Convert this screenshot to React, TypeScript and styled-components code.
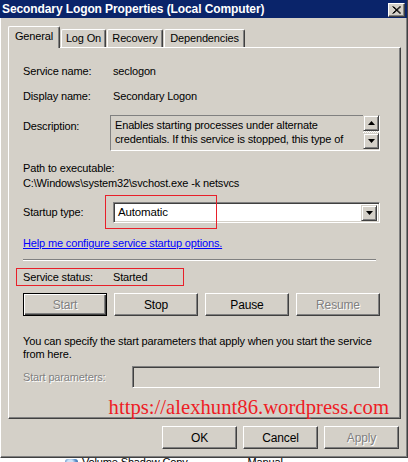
import React from "react";
import styled, { createGlobalStyle, css } from "styled-components";

const GlobalStyle = createGlobalStyle`
  html, body { margin: 0; padding: 0; background: #ffffff; }
  body {
    font-family: "Liberation Sans", Arial, sans-serif;
    font-size: 11px;
    letter-spacing: -0.15px;
    color: #000;
    overflow: hidden;
  }
  * { box-sizing: border-box; }
`;

const FACE = "#d4d0c8";
const SHADOW = "#808080";
const DARK = "#404040";

const Page = styled.div`
  width: 408px;
  height: 462px;
  display: flex;
  flex-direction: column;
  overflow: hidden;
`;

const Window = styled.div`
  width: 408px;
  height: 458px;
  flex: none;
  background: ${FACE};
  border-left: 1px solid #ffffff;
  border-right: 1px solid ${DARK};
  border-bottom: 1px solid ${DARK};
  box-shadow: inset -1px -1px 0 ${SHADOW};
  display: flex;
  flex-direction: column;
`;

const TitleBar = styled.div`
  height: 18px;
  flex: none;
  background: #0a246a;
  display: flex;
  align-items: center;
  justify-content: space-between;
  padding: 0 2px 0 2px;
  margin-left: -1px;
`;

const TitleText = styled.span`
  color: #ffffff;
  font-weight: bold;
  font-size: 12px;
  letter-spacing: -0.1px;
  white-space: nowrap;
`;

const CloseButton = styled.div`
  width: 17px;
  height: 14px;
  margin-top: 2px;
  background: ${FACE};
  border-top: 1px solid #ffffff;
  border-left: 1px solid #ffffff;
  border-right: 1px solid ${DARK};
  border-bottom: 1px solid ${DARK};
  box-shadow: inset -1px -1px 0 ${SHADOW};
  display: flex;
  align-items: center;
  justify-content: center;
`;

const TabStrip = styled.div`
  display: flex;
  align-items: flex-end;
  height: 21px;
  margin-top: 8px;
  margin-left: 7px;
  position: relative;
  z-index: 2;
`;

const Tab = styled.div<{ $w: number; $active?: boolean }>`
  width: ${(p) => p.$w}px;
  display: flex;
  align-items: center;
  justify-content: center;
  white-space: nowrap;
  background: ${FACE};
  border-top: 1px solid #ffffff;
  border-left: 1px solid #ffffff;
  border-right: 1px solid ${DARK};
  box-shadow: inset -1px 0 0 ${SHADOW};
  border-top-left-radius: 2px;
  border-top-right-radius: 2px;
  ${(p) =>
    p.$active
      ? css`
          height: 22px;
          margin-bottom: -1px;
          padding-bottom: 3px;
        `
      : css`
          height: 18px;
          margin-left: 1px;
          padding-bottom: 1px;
        `}
`;

const Panel = styled.div`
  width: 393px;
  height: 372px;
  margin-left: 7px;
  flex: none;
  border-top: 1px solid #ffffff;
  border-left: 1px solid #ffffff;
  border-right: 1px solid ${DARK};
  border-bottom: 1px solid ${DARK};
  box-shadow: inset -1px -1px 0 ${SHADOW};
  padding: 0 0 0 14px;
  display: flex;
  flex-direction: column;
`;

const Row = styled.div<{ $top: number; $align?: string }>`
  display: flex;
  align-items: ${(p) => p.$align || "center"};
  margin-top: ${(p) => p.$top}px;
  line-height: 13px;
  white-space: nowrap;
  position: relative;
`;

const Label = styled.div<{ $w?: number; $disabled?: boolean; $pt?: number }>`
  width: ${(p) => p.$w ?? 90}px;
  flex: none;
  line-height: 13px;
  padding-top: ${(p) => p.$pt ?? 0}px;
  ${(p) =>
    p.$disabled &&
    css`
      color: ${SHADOW};
      text-shadow: 1px 1px 0 #ffffff;
    `}
`;

const Text = styled.div<{ $top: number }>`
  margin-top: ${(p) => p.$top}px;
  line-height: 13px;
`;

const DescBox = styled.div`
  width: 270px;
  height: 36px;
  margin-left: -3px;
  border-top: 1px solid ${SHADOW};
  border-left: 1px solid ${SHADOW};
  border-right: 1px solid #ffffff;
  border-bottom: 1px solid #ffffff;
  display: flex;
  padding: 1px 0 0 4px;
`;

const DescText = styled.div`
  flex: 1;
  line-height: 14px;
  white-space: normal;
  padding-top: 1px;
`;

const ScrollCol = styled.div`
  width: 16px;
  display: flex;
  flex-direction: column;
  justify-content: space-between;
  margin-top: -2px;
  margin-bottom: 1px;
  background-image: repeating-conic-gradient(#ffffff 0% 25%, ${FACE} 0% 50%);
  background-size: 2px 2px;
`;

const ScrollBtn = styled.div`
  width: 16px;
  height: 16px;
  background: ${FACE};
  border-top: 1px solid ${FACE};
  border-left: 1px solid ${FACE};
  border-right: 1px solid ${DARK};
  border-bottom: 1px solid ${DARK};
  box-shadow: inset 1px 1px 0 #ffffff, inset -1px -1px 0 ${SHADOW};
  display: flex;
  align-items: center;
  justify-content: center;
`;

const Combo = styled.div`
  width: 267px;
  height: 21px;
  border-top: 1px solid ${SHADOW};
  border-left: 1px solid ${SHADOW};
  border-right: 1px solid #ffffff;
  border-bottom: 1px solid #ffffff;
  box-shadow: inset 1px 1px 0 ${DARK}, inset -1px -1px 0 ${FACE};
  background: #ffffff;
  display: flex;
  align-items: center;
  justify-content: space-between;
  padding: 0 2px 0 4px;
  font-size: 11.5px;
`;

const Annotation = styled.div<{ $l: number; $t: number; $w: number; $h: number }>`
  position: absolute;
  left: ${(p) => p.$l}px;
  top: ${(p) => p.$t}px;
  width: ${(p) => p.$w}px;
  height: ${(p) => p.$h}px;
  border: 1px solid #e8202a;
  pointer-events: none;
`;

const HelpLink = styled.a`
  color: #0000ff;
  text-decoration: underline;
  margin-top: 14px;
  line-height: 13px;
  align-self: flex-start;
`;

const Separator = styled.div`
  width: 353px;
  height: 2px;
  margin-top: 9px;
  border-top: 1px solid ${SHADOW};
  border-bottom: 1px solid #ffffff;
`;

const StatusBox = styled.div`
  width: 168px;
  height: 21px;
  margin-top: 7px;
  margin-left: -7px;
  padding-left: 6px;
  border: 1px solid #e8202a;
  display: flex;
  align-items: center;
  white-space: nowrap;
`;

const ButtonGrid = styled.div`
  display: grid;
  grid-template-columns: repeat(4, 84px);
  column-gap: 7px;
  margin-top: 7px;
`;

const Button = styled.div<{ $disabled?: boolean; $default?: boolean; $w?: number }>`
  height: 23px;
  ${(p) => p.$w && css`width: ${p.$w}px;`}
  background: ${FACE};
  display: flex;
  align-items: center;
  justify-content: center;
  font-size: 12px;
  border-top: 1px solid #ffffff;
  border-left: 1px solid #ffffff;
  border-right: 1px solid ${DARK};
  border-bottom: 1px solid ${DARK};
  box-shadow: inset -1px -1px 0 ${SHADOW};
  ${(p) =>
    p.$default &&
    css`
      border: 1px solid #000000;
      box-shadow: inset 1px 1px 0 #ffffff, inset -1px -1px 0 ${DARK},
        inset -2px -2px 0 ${SHADOW};
    `}
  ${(p) =>
    p.$disabled &&
    css`
      color: ${SHADOW};
      text-shadow: 1px 1px 0 #ffffff;
    `}
`;

const Input = styled.div<{ $w: number }>`
  width: ${(p) => p.$w}px;
  height: 22px;
  margin-left: 19px;
  background: ${FACE};
  border-top: 1px solid ${SHADOW};
  border-left: 1px solid ${SHADOW};
  border-right: 1px solid #ffffff;
  border-bottom: 1px solid #ffffff;
  box-shadow: inset 1px 1px 0 ${DARK}, inset -1px -1px 0 ${FACE};
`;

const Watermark = styled.div`
  align-self: flex-end;
  margin-top: 8px;
  margin-right: 11px;
  font-family: "Liberation Serif", "Times New Roman", serif;
  font-size: 20.7px;
  letter-spacing: 0;
  line-height: 22px;
  color: #ee1c25;
  white-space: nowrap;
`;

const Footer = styled.div`
  display: flex;
  justify-content: flex-end;
  gap: 6px;
  margin-top: 7px;
  padding-right: 8px;
`;

const Behind = styled.div`
  flex: 1;
  display: flex;
  align-items: flex-start;
  overflow: hidden;
  background: #ffffff;
  font-size: 11px;
  line-height: 13px;
  white-space: nowrap;
`;

const BehindIcon = styled.div`
  width: 13px;
  height: 10px;
  margin-left: 65px;
  margin-top: 1px;
  border-radius: 3px;
  background: radial-gradient(circle at 40% 40%, #cfe3f7 0 30%, #5b8fc9 60%, #2d5f9b 100%);
`;

const BehindText = styled.span<{ $ml: number }>`
  margin-left: ${(p) => p.$ml}px;
  margin-top: -2px;
`;

const Arrow = ({ up }: { up?: boolean }) => (
  <svg width="7" height="4" viewBox="0 0 7 4">
    <polygon points={up ? "3.5,0 7,4 0,4" : "0,0 7,0 3.5,4"} fill="#000" />
  </svg>
);

const CloseX = () => (
  <svg width="9" height="8" viewBox="0 0 9 8">
    <path d="M0.5 0.5 L8 7.5 M1.5 0.5 L9 7.5 M8 0.5 L0.5 7.5 M9 0.5 L1.5 7.5" stroke="#000" strokeWidth="1" />
  </svg>
);

export default function App() {
  return (
    <Page>
      <GlobalStyle />
      <Window>
        <TitleBar>
          <TitleText>Secondary Logon Properties (Local Computer)</TitleText>
          <CloseButton>
            <CloseX />
          </CloseButton>
        </TitleBar>

        <TabStrip>
          <Tab $w={52} $active>General</Tab>
          <Tab $w={45}>Log On</Tab>
          <Tab $w={56}>Recovery</Tab>
          <Tab $w={81}>Dependencies</Tab>
        </TabStrip>

        <Panel>
          <Row $top={17}>
            <Label>Service name:</Label>
            <span>seclogon</span>
          </Row>
          <Row $top={12}>
            <Label>Display name:</Label>
            <span>Secondary Logon</span>
          </Row>
          <Row $top={12} $align="flex-start">
            <Label $pt={5}>Description:</Label>
            <DescBox>
              <DescText>
                Enables starting processes under alternate
                <br />
                credentials. If this service is stopped, this type of
              </DescText>
              <ScrollCol>
                <ScrollBtn>
                  <Arrow up />
                </ScrollBtn>
                <ScrollBtn>
                  <Arrow />
                </ScrollBtn>
              </ScrollCol>
            </DescBox>
          </Row>
          <Text $top={11}>Path to executable:</Text>
          <Text $top={2}>C:\Windows\system32\svchost.exe -k netsvcs</Text>
          <Row $top={12}>
            <Label>Startup type:</Label>
            <Combo>
              <span>Automatic</span>
              <ScrollBtn>
                <Arrow />
              </ScrollBtn>
            </Combo>
            <Annotation $l={82} $t={-7} $w={112} $h={34} />
          </Row>
          <HelpLink>Help me configure service startup options.</HelpLink>
          <Separator />
          <StatusBox>
            <Label $w={90}>Service status:</Label>
            <span>Started</span>
          </StatusBox>
          <ButtonGrid>
            <Button $default $disabled>Start</Button>
            <Button>Stop</Button>
            <Button>Pause</Button>
            <Button $disabled>Resume</Button>
          </ButtonGrid>
          <Text $top={19}>
            You can specify the start parameters that apply when you start the service
            <br />
            from here.
          </Text>
          <Row $top={5}>
            <Label $w={90} $disabled>Start parameters:</Label>
            <Input $w={248} />
          </Row>
          <Watermark>https://alexhunt86.wordpress.com</Watermark>
        </Panel>

        <Footer>
          <Button $w={75}>OK</Button>
          <Button $w={75}>Cancel</Button>
          <Button $w={75} $disabled>Apply</Button>
        </Footer>
      </Window>
      <Behind>
        <BehindIcon />
        <BehindText $ml={4}>Volume Shadow Copy</BehindText>
        <BehindText $ml={60}>Manual</BehindText>
      </Behind>
    </Page>
  );
}
